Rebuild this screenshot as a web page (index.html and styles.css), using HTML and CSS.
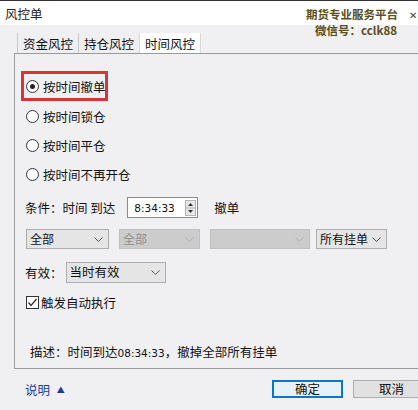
FILE: index.html
```html
<!DOCTYPE html>
<html lang="zh-CN">
<head>
    <meta charset="UTF-8">
    <title>风控单</title>
    <link rel="stylesheet" href="styles.css">
</head>
<body>
    <div class="titlebar">
        <span class="title">风控单</span>
        <div class="watermark">
            <div>期货专业服务平台</div>
            <div>微信号：cclk88</div>
        </div>
        <span class="close">✕</span>
    </div>

    <div class="content">
        <div class="tabs">
            <span class="tab">资金风控</span>
            <span class="tab">持仓风控</span>
            <span class="tab active">时间风控</span>
        </div>

        <div class="panel">
            <div class="radio-row highlight">
                <span class="radio checked"></span>按时间撤单
            </div>
            <div class="radio-row"><span class="radio"></span>按时间锁仓</div>
            <div class="radio-row"><span class="radio"></span>按时间平仓</div>
            <div class="radio-row"><span class="radio"></span>按时间不再开仓</div>

            <div class="cond-row">
                <span class="label">条件：时间&nbsp;到达</span>
                <div class="spinner">
                    <span class="spin-value">8:34:33</span>
                    <span class="spin-btns">
                        <svg width="11" height="16" viewBox="0 0 11 16">
                            <rect x="0.5" y="0.5" width="10" height="15" fill="#e8e8e8" stroke="#b5b5b5"/>
                            <line x1="1" y1="8" x2="10" y2="8" stroke="#b5b5b5"/>
                            <path d="M3 6 L5.5 3 L8 6 Z" fill="#333"/>
                            <path d="M3 10 L5.5 13 L8 10 Z" fill="#333"/>
                        </svg>
                    </span>
                </div>
                <span class="cond-action">撤单</span>
            </div>

            <div class="select-row">
                <div class="select w83">全部<svg class="chev" width="9" height="5" viewBox="0 0 9 5"><polyline points="0.5,0.5 4.5,4.5 8.5,0.5" fill="none" stroke="#555"/></svg></div>
                <div class="select w80 disabled">全部<svg class="chev" width="9" height="5" viewBox="0 0 9 5"><polyline points="0.5,0.5 4.5,4.5 8.5,0.5" fill="none" stroke="#b0b0b0"/></svg></div>
                <div class="select w100 disabled"><svg class="chev" width="9" height="5" viewBox="0 0 9 5"><polyline points="0.5,0.5 4.5,4.5 8.5,0.5" fill="none" stroke="#b0b0b0"/></svg></div>
                <div class="select w71">所有挂单<svg class="chev" width="9" height="5" viewBox="0 0 9 5"><polyline points="0.5,0.5 4.5,4.5 8.5,0.5" fill="none" stroke="#555"/></svg></div>
            </div>

            <div class="valid-row">
                <span class="label">有效：</span>
                <div class="select w100 tall">当时有效<svg class="chev" width="9" height="5" viewBox="0 0 9 5"><polyline points="0.5,0.5 4.5,4.5 8.5,0.5" fill="none" stroke="#555"/></svg></div>
            </div>

            <div class="check-row">
                <span class="checkbox">
                    <svg width="13" height="13" viewBox="0 0 13 13">
                        <rect x="0.5" y="0.5" width="12" height="12" fill="#fff" stroke="#333"/>
                        <polyline points="2.5,6.5 5,9.5 10.5,3" fill="none" stroke="#333" stroke-width="1.3"/>
                    </svg>
                </span>触发自动执行
            </div>

            <div class="desc">描述：时间到达<span class="mono">08:34:33</span>，撤掉全部所有挂单</div>
        </div>

        <div class="footer">
            <span class="help">说明 <span class="tri">▲</span></span>
            <div class="buttons">
                <button class="btn primary">确定</button>
                <button class="btn">取消</button>
            </div>
        </div>
    </div>
</body>
</html>
```

FILE: styles.css
```css
body {
    margin: 0;
    width: 418px;
    height: 410px;
    overflow: hidden;
    font-family: "Noto Sans CJK SC", "Liberation Sans", sans-serif;
    font-size: 12px;
    color: #111;
    background-color: #f0eff2;
}

.titlebar {
    position: relative;
    height: 24px;
    background-color: #fff;
    border-top: 1px solid #333;
    display: flex;
    align-items: center;
}

.title {
    margin-left: 5px;
    font-size: 12.5px;
    color: #222;
}

.watermark {
    position: absolute;
    right: 20px;
    top: 5px;
    text-align: right;
    font-weight: bold;
    font-size: 11.5px;
    line-height: 16px;
    color: #5a4d20;
}

.watermark div:last-child {
    margin-right: 1px;
}

.close {
    position: absolute;
    right: 1px;
    top: 6px;
    font-size: 10px;
    color: #444;
}

.content {
    padding-left: 14px;
}

.tabs {
    display: flex;
    margin-top: 8px;
    height: 20px;
    padding-left: 3px;
}

.tab {
    width: 60px;
    text-align: center;
    line-height: 21px;
    border-left: 1px solid #c8c8c8;
    color: #111;
    font-size: 12.5px;
}

.tab.active {
    background-color: #fff;
    border-left: 1px solid #d8d8d8;
    border-right: 1px solid #d8d8d8;
}

.panel {
    height: 314px;
    border: 1px solid #9a9a9a;
    border-right: none;
    padding-left: 6px;
    display: flex;
    flex-direction: column;
    align-items: flex-start;
}

.radio-row {
    display: flex;
    align-items: center;
    height: 29px;
    padding-left: 5px;
    font-size: 12.5px;
    white-space: nowrap;
}

.radio-row.highlight {
    box-sizing: border-box;
    margin-top: 17px;
    height: 30px;
    width: 87px;
    padding-left: 2px;
    border: 3px solid #d8353b;
    margin-bottom: 1px;
}

.radio {
    width: 11px;
    height: 11px;
    border: 1px solid #333;
    border-radius: 50%;
    background-color: #fff;
    margin-right: 4px;
    position: relative;
    flex-shrink: 0;
}

.radio.checked::after {
    content: "";
    position: absolute;
    left: 3px;
    top: 3px;
    width: 5px;
    height: 5px;
    border-radius: 50%;
    background-color: #222;
}

.cond-row {
    display: flex;
    align-items: center;
    margin-top: 8px;
    height: 21px;
    padding-left: 4px;
}

.label {
    font-size: 12.5px;
}

.spinner {
    margin-left: 12px;
    border: 1px solid #8a8a8a;
    background-color: #fff;
    display: flex;
    align-items: center;
    justify-content: space-between;
    padding: 0 1px 0 6px;
    box-sizing: border-box;
    width: 71px;
    height: 21px;
}

.spin-value {
    font-family: "DejaVu Sans", sans-serif;
    font-size: 10.5px;
}

.spin-btns {
    display: flex;
}

.cond-action {
    margin-left: 16px;
    font-size: 12.5px;
}

.select-row {
    display: flex;
    gap: 10px;
    margin-top: 11px;
    padding-left: 5px;
}

.select {
    position: relative;
    height: 20px;
    box-sizing: border-box;
    border: 1px solid #adadad;
    background-color: #e5e5e5;
    padding-left: 3px;
    line-height: 18px;
    font-size: 12px;
    white-space: nowrap;
}

.select.disabled {
    background-color: #cccccc;
    border-color: #c0c0c0;
    color: #8c8c8c;
}

.select-row .select.w71 {
    margin-left: -4px;
}

.chev {
    position: absolute;
    right: 5px;
    top: 7px;
}

.w83 { width: 83px; }
.w80 { width: 81px; }
.w100 { width: 100px; }
.w71 { width: 71px; }

.select.tall {
    height: 21px;
    margin-left: 3px;
    font-size: 12.5px;
}

.valid-row {
    display: flex;
    align-items: center;
    margin-top: 13px;
    padding-left: 4px;
}

.check-row {
    display: flex;
    align-items: center;
    margin-top: 11px;
    padding-left: 5px;
    height: 16px;
    font-size: 12.5px;
}

.checkbox {
    display: flex;
    margin-right: 2px;
}

.desc {
    margin-top: 32px;
    padding-left: 9px;
    font-size: 12.5px;
}

.mono {
    font-family: "DejaVu Sans", sans-serif;
    font-size: 10.5px;
}

.footer {
    display: flex;
    align-items: center;
    justify-content: space-between;
    height: 40px;
}

.help {
    margin-left: 11px;
    color: #1b3d96;
    font-size: 12.5px;
}

.tri {
    font-size: 8px;
    margin-left: 4px;
    vertical-align: 2px;
}

.buttons {
    display: flex;
    gap: 10px;
    margin-right: -12px;
}

.btn {
    width: 77px;
    height: 18px;
    padding: 0;
    border: 1px solid #adadad;
    background-color: #e1e1e1;
    font-family: "Noto Sans CJK SC", sans-serif;
    font-size: 12.5px;
    line-height: 14px;
    color: #111;
}

.btn.primary {
    width: 71px;
    border: 2px solid #0a78c8;
    background-color: #e5f1fb;
}
```
